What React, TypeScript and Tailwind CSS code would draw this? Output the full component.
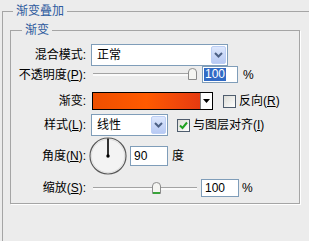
import type { ReactNode } from "react";

function Label({ children }: { children: ReactNode }) {
  return <div className="w-[75px] shrink-0 text-right">{children}</div>;
}

function Key({ k }: { k: string }) {
  return <span className="underline underline-offset-1">{k}</span>;
}

function Chevron() {
  return (
    <svg width="9" height="6" viewBox="0 0 9 6">
      <path d="M1 1 L4.5 4.5 L8 1" fill="none" stroke="#4d6185" strokeWidth="2" />
    </svg>
  );
}

function Select({ value, className }: { value: string; className: string }) {
  return (
    <div className={className}>
      <span className="pl-[5px]">{value}</span>
      <div className="mr-[1px] ml-auto flex h-[18px] w-[15px] items-center justify-center rounded-[2px] border border-[#bccff5] bg-linear-to-b from-[#dde7fc] to-[#b7c9f3]">
        <Chevron />
      </div>
    </div>
  );
}

function Thumb({ green }: { green?: boolean }) {
  return (
    <svg width="9" height="12" viewBox="0 0 9 12">
      <path d="M0.5 4 Q0.5 0.5 4.5 0.5 Q8.5 0.5 8.5 4 V11.5 H0.5 Z" fill="#f5f5f2" stroke="#8c8c8c" />
      {green && <rect x="1" y="10" width="7" height="2" fill="#3aa33a" />}
    </svg>
  );
}

function Slider({ pos, green }: { pos: number; green?: boolean }) {
  return (
    <div className="relative ml-[7px] flex h-[17px] w-[104px] items-center">
      <div className="h-[3px] w-full border-t border-[#a3a3a3] bg-[#fafafa]" />
      <div className="absolute top-[2px]" style={{ left: pos }}>
        <Thumb green={green} />
      </div>
    </div>
  );
}

function Check({ checked }: { checked?: boolean }) {
  return (
    <div className="flex h-[13px] w-[13px] shrink-0 items-center justify-center border border-[#4f5d6e] bg-linear-to-br from-[#dcdcd6] to-white">
      {checked && (
        <svg width="9" height="9" viewBox="0 0 9 9">
          <path d="M1 4.5 L3.5 7 L8 1.5" fill="none" stroke="#21a121" strokeWidth="2" />
        </svg>
      )}
    </div>
  );
}

function Dial() {
  return (
    <svg width="38" height="38" viewBox="0 0 38 38" className="ml-[3px] shrink-0">
      <circle cx="19" cy="19" r="18" fill="#f3f3f3" stroke="#5a5a5a" strokeWidth="1.2" />
      <circle cx="19" cy="19" r="16.6" fill="none" stroke="#d8d8d8" strokeWidth="0.8" />
      <line x1="19" y1="1.5" x2="19" y2="19" stroke="#000" strokeWidth="1.6" />
      <circle cx="19" cy="19" r="1.7" fill="#000" />
    </svg>
  );
}

export default function App() {
  return (
    <div className="h-[241px] w-[309px] overflow-hidden bg-[#ececec] font-['Liberation_Sans','Noto_Sans_CJK_SC',sans-serif] text-[12px] leading-[16px] text-black">
      <fieldset className="mt-[3px] ml-[2px] min-h-[240px] border-t border-l border-[#a5a5a5] pb-0">
        <legend className="ml-[10px] px-[3px] text-[#2d5a9e]">渐变叠加</legend>
        <fieldset className="mt-[3px] ml-[7px] h-[182px] w-[290px] border border-[#a5a5a5] shadow-[1px_1px_0_#fff]">
          <legend className="ml-[11px] px-[3px] text-[#2d5a9e]">渐变</legend>
          <div className="flex flex-col">
            <div className="mt-[6px] flex h-[22px] items-center">
              <Label>混合模式:</Label>
              <Select value="正常" className="ml-[5px] flex h-[22px] w-[137px] items-center border border-[#7f9db9] bg-white" />
            </div>

            <div className="flex h-[17px] items-center">
              <Label>
                不透明度(<Key k="P" />):
              </Label>
              <Slider pos={95} />
              <div className="ml-[5px] flex h-[17px] w-[36px] items-center border border-[#7f9db9] bg-white pl-[1px]">
                <span className="bg-[#316ac5] px-[1px] leading-[13px] text-white">100</span>
              </div>
              <span className="ml-[5px]">%</span>
            </div>

            <div className="mt-[9px] flex h-[18px] items-center">
              <Label>渐变:</Label>
              <div className="ml-[6px] flex h-[18px] w-[121px] border border-black bg-white">
                <div className="h-full w-[107px] bg-linear-to-r from-[#ee4f00] via-[#ff5a00] to-[#e53a10]" />
                <div className="flex flex-1 items-center justify-center border-l border-[#808080]">
                  <svg width="7" height="4" viewBox="0 0 7 4">
                    <path d="M0 0 H7 L3.5 4 Z" fill="#000" />
                  </svg>
                </div>
              </div>
              <div className="ml-[10px]">
                <Check />
              </div>
              <span className="ml-[3px]">
                反向(<Key k="R" />)
              </span>
            </div>

            <div className="mt-[4px] flex h-[22px] items-center">
              <Label>
                样式(<Key k="L" />):
              </Label>
              <Select value="线性" className="ml-[5px] flex h-[22px] w-[77px] items-center border border-[#7f9db9] bg-white" />
              <div className="ml-[9px]">
                <Check checked />
              </div>
              <span className="ml-[3px]">
                与图层对齐(<Key k="I" />)
              </span>
            </div>

            <div className="mt-[1px] flex h-[38px] items-center">
              <Label>
                角度(<Key k="N" />):
              </Label>
              <Dial />
              <div className="ml-[3px] flex h-[20px] w-[38px] items-center border border-[#7f9db9] bg-white pl-[3px]">90</div>
              <span className="ml-[4px]">度</span>
            </div>

            <div className="mt-[4px] flex h-[18px] items-center">
              <Label>
                缩放(<Key k="S" />):
              </Label>
              <Slider pos={59} green />
              <div className="ml-[4px] flex h-[18px] w-[38px] items-center border border-[#7f9db9] bg-white pl-[3px]">100</div>
              <span className="ml-[3px]">%</span>
            </div>
          </div>
        </fieldset>
      </fieldset>
    </div>
  );
}
